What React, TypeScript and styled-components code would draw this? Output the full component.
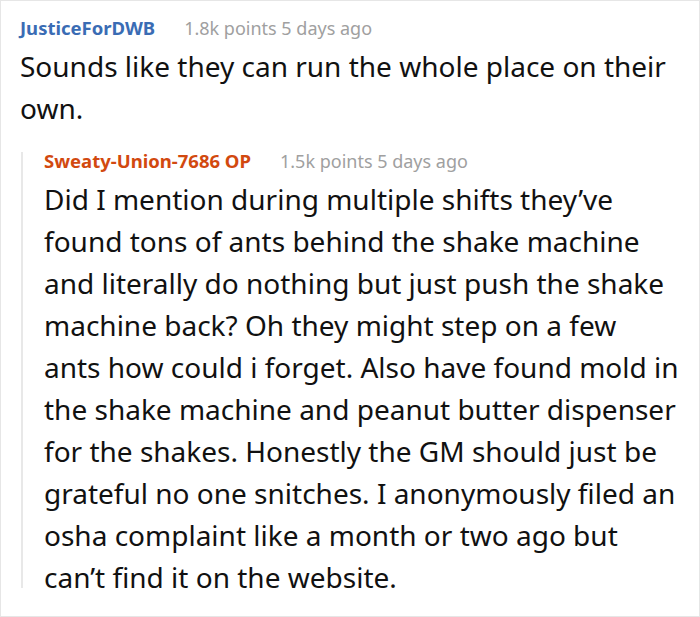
import React from 'react'
import styled, { createGlobalStyle } from 'styled-components'

const GlobalStyle = createGlobalStyle`
  html, body {
    margin: 0;
    padding: 0;
    background: #ffffff;
  }
  body {
    font-family: 'Noto Sans', 'Open Sans', sans-serif;
  }
`

const Card = styled.div`
  box-sizing: border-box;
  width: 700px;
  height: 617px;
  border: 1px solid #e6e6e6;
  background: #ffffff;
  padding: 18px 4px 0 19px;
  overflow: hidden;
`

const Header = styled.div`
  display: flex;
  align-items: baseline;
  gap: 29px;
  line-height: 18px;
  margin-bottom: 8px;
`

const Author = styled.span<{ $op?: boolean }>`
  font-size: 18.5px;
  font-weight: 700;
  color: ${(p) => (p.$op ? '#d2490f' : '#3a6cb4')};
`

const Meta = styled.span`
  font-size: 18px;
  color: #a0a0a0;
`

const Body = styled.div`
  margin: 0;
  font-size: 28px;
  line-height: 42px;
  color: #111111;
`

const Line = styled.span`
  display: block;
  white-space: nowrap;
`

const Reply = styled.div`
  display: flex;
  flex-direction: column;
  margin: 23px 0 0 1px;
  padding-left: 21px;
  border-left: 2px solid #e8e8e8;

  & ${Body} {
    margin-bottom: -10px;
  }
`

interface CommentProps {
  author: string
  meta: string
  op?: boolean
  lines: string[]
}

const Comment: React.FC<CommentProps> = ({ author, meta, op, lines }) => (
  <div>
    <Header>
      <Author $op={op}>{author}</Author>
      <Meta>{meta}</Meta>
    </Header>
    <Body>
      {lines.map((line, i) => (
        <Line key={i}>{line}</Line>
      ))}
    </Body>
  </div>
)

const replyLines = [
  'Did I mention during multiple shifts they’ve',
  'found tons of ants behind the shake machine',
  'and literally do nothing but just push the shake',
  'machine back? Oh they might step on a few',
  'ants how could i forget. Also have found mold in',
  'the shake machine and peanut butter dispenser',
  'for the shakes. Honestly the GM should just be',
  'grateful no one snitches. I anonymously filed an',
  'osha complaint like a month or two ago but',
  'can’t find it on the website.',
]

export default function App() {
  return (
    <>
      <GlobalStyle />
      <Card>
        <Comment
          author="JusticeForDWB"
          meta="1.8k points 5 days ago"
          lines={['Sounds like they can run the whole place on their', 'own.']}
        />
        <Reply>
          <Comment author="Sweaty-Union-7686 OP" meta="1.5k points 5 days ago" op lines={replyLines} />
        </Reply>
      </Card>
    </>
  )
}
